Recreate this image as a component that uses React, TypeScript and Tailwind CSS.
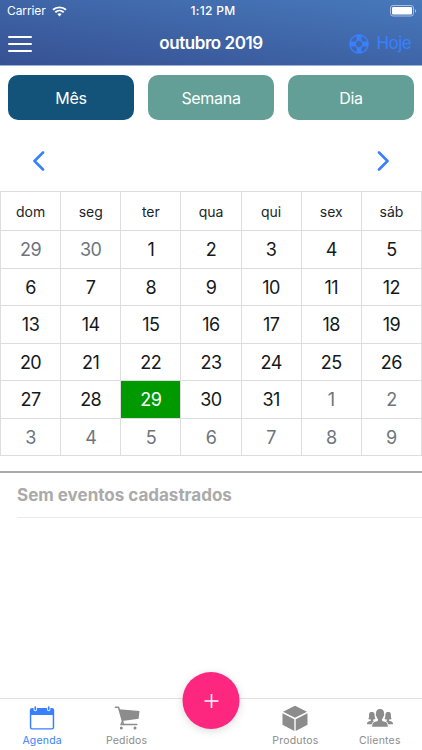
import { IoIosHelpBuoy } from "react-icons/io";

const weekDays = ["dom", "seg", "ter", "qua", "qui", "sex", "sáb"];

const weeks = [
  [29, 30, 1, 2, 3, 4, 5],
  [6, 7, 8, 9, 10, 11, 12],
  [13, 14, 15, 16, 17, 18, 19],
  [20, 21, 22, 23, 24, 25, 26],
  [27, 28, 29, 30, 31, 1, 2],
  [3, 4, 5, 6, 7, 8, 9],
];

function dayClass(day: number, week: number) {
  if (day === 29 && week === 4) return "bg-[#009900] text-white";
  if ((week === 0 && day > 7) || (week > 3 && day < 15)) return "text-[#6c757d]";
  return "text-[#15181b]";
}

function Header() {
  return (
    <header className="h-[66px] border-b border-[#9cb0dc] bg-linear-to-tr from-[#365193] to-[#4779bb] text-white">
      <div className="grid h-[22px] grid-cols-3 items-center pl-[7px] pr-[5px] text-[12px]">
        <div className="flex items-center gap-[6px] tracking-[-0.1px]">
          <span>Carrier</span>
          <svg width="15" height="11" viewBox="0 0 15 11" fill="none" stroke="white" strokeWidth="1.9">
            <path d="M1 3.8C4.6.5 10.4.5 14 3.8" />
            <path d="M3.3 6.3C5.7 4.1 9.3 4.1 11.7 6.3" />
            <path d="M5.3 8.1C6.6 7 8.4 7 9.7 8.1L7.5 10.4Z" fill="white" stroke="none" />
          </svg>
        </div>
        <span className="pl-[2px] text-center font-medium tracking-[0.3px]">1:12 PM</span>
        <svg className="justify-self-end" width="27" height="12" viewBox="0 0 27 12">
          <rect x="0.5" y="0.5" width="23" height="10.5" rx="2.5" fill="none" stroke="#a9bfdf" />
          <rect x="2" y="2" width="20" height="7.5" rx="1.2" fill="white" />
          <path d="M25 4v3.8c1.5-.7 1.5-3.1 0-3.8" fill="#a9bfdf" />
        </svg>
      </div>
      <div className="grid h-[43px] grid-cols-3 items-center pl-2 pr-[11px]">
        <div className="flex w-6 flex-col gap-[5px]">
          <span className="h-[2px] rounded-full bg-white" />
          <span className="h-[2px] rounded-full bg-white" />
          <span className="h-[2px] rounded-full bg-white" />
        </div>
        <h1 className="whitespace-nowrap pl-[3px] text-center text-[17px] font-semibold tracking-[-0.45px]">outubro 2019</h1>
        <div className="flex items-center justify-end gap-[6px] text-[#3880ff]">
          <IoIosHelpBuoy size={24} />
          <span className="text-[17px] tracking-[-0.6px]">Hoje</span>
        </div>
      </div>
    </header>
  );
}

function Calendar() {
  return (
    <div className="grid grid-cols-7 grid-rows-[39px_repeat(6,37.5px)] border-l border-t border-[#dddddd]">
      {weekDays.map((name) => (
        <div key={name} className="flex items-center justify-center border-b border-r border-[#dddddd] pt-[1px] text-[14px] text-[#212529]">
          {name}
        </div>
      ))}
      {weeks.map((days, week) =>
        days.map((day) => (
          <div
            key={`${week}-${day}`}
            className={`flex items-center justify-center border-b border-r border-[#dddddd] pt-[1px] text-[18px] tracking-[-0.5px] ${dayClass(day, week)}`}
          >
            {day}
          </div>
        ))
      )}
    </div>
  );
}

function CalendarIcon() {
  return (
    <svg width="30" height="30" viewBox="0 0 30 30">
      <path
        d="M5 4h20a2.200 2.200 0 0 1 2.200 2.200v17a2.200 2.200 0 0 1-2.200 2.200H5a2.200 2.200 0 0 1-2.200-2.200v-17A2.200 2.200 0 0 1 5 4M4.300 11v12.500a.8.8 0 0 0 .8.8h19.800a.8.8 0 0 0 .8-.8V11z"
        fill="currentColor"
        fillRule="evenodd"
      />
      <path d="M8.300 3v2.500M21.700 3v2.500" stroke="white" strokeWidth="3.400" strokeLinecap="round" />
      <path d="M8.300 3.200v2.300M21.700 3.200v2.300" stroke="currentColor" strokeWidth="1.700" strokeLinecap="round" />
    </svg>
  );
}

function CartIcon() {
  return (
    <svg width="30" height="30" viewBox="0 0 30 30" fill="currentColor">
      <path d="M3.400 3.300h3.100l5 17.200h13.300" fill="none" stroke="currentColor" strokeWidth="1.500" strokeLinecap="round" strokeLinejoin="round" />
      <path d="M7.200 5.300L27.500 7l-.9 7.800L10.400 17z" />
      <path d="M10.300 17.200L9 20.500h3" fill="none" stroke="currentColor" strokeWidth="1.300" />
      <circle cx="9.300" cy="24" r="1.500" />
      <circle cx="23" cy="24" r="1.500" />
    </svg>
  );
}

function CubeIcon() {
  return (
    <svg width="30" height="30" viewBox="0 0 30 30" fill="currentColor">
      <path d="M15 1.800L27 7.700 15 13.800 3 7.700z" />
      <path d="M2.500 9.200L14.300 15.200v11.800L2.500 20.700z" />
      <path d="M27.500 9.200L15.700 15.200v11.800l11.800-6.300z" />
    </svg>
  );
}

function PeopleIcon() {
  return (
    <svg width="30" height="30" viewBox="0 0 30 30" fill="currentColor">
      <path d="M2 20.300c0-2.300.9-2.700 3-3.200 1.200-.3 1.300-.9 1-1.500-1.800-.1-2.600-.5-2.700-.8 1-.8.7-2.600.8-4.600C4.200 8.600 5.200 8 6.700 8s2.700.6 2.900 2.300c.1 1.800 0 3.500.9 4.500-.2.400-1.200.7-2.400.8-.2.900.1 1.300.8 1.600-1.300.8-2 1.700-2.100 3.100z" />
      <path d="M28 20.300c0-2.300-.9-2.700-3-3.200-1.200-.3-1.300-.9-1-1.500 1.800-.1 2.600-.5 2.700-.8-1-.8-.7-2.600-.8-4.600C25.800 8.600 24.800 8 23.300 8s-2.700.6-2.900 2.300c-.1 1.800 0 3.500-.9 4.500.2.400 1.200.7 2.400.8.2.900-.1 1.300-.8 1.600 1.300.8 2 1.700 2.100 3.100z" />
      <path d="M7.200 22.700c0-3.500 1-4.500 3.900-5.200 1.900-.5 2.100-1.200 1.900-2.300-.9-.8-1.300-1.900-1.500-2.900-.7-.2-.9-2-.5-2.400-.3-3.400 1.400-4.900 4-4.900s4.300 1.500 4 4.900c.4.400.2 2.200-.5 2.400-.2 1-.6 2.100-1.500 2.900-.2 1.100 0 1.800 1.900 2.300 2.900.7 3.900 1.700 3.900 5.200z" />
    </svg>
  );
}

function TabBar() {
  return (
    <nav className="relative grid h-[52px] grid-cols-5 border-t border-[#e2e2e2] pt-[5px] text-[10.5px] leading-[14px] tracking-[0.2px] text-[#8c8c8c]">
      <a className="flex flex-col items-center text-[#3880ff]">
        <CalendarIcon />
        <span>Agenda</span>
      </a>
      <a className="flex flex-col items-center">
        <CartIcon />
        <span>Pedidos</span>
      </a>
      <button className="absolute left-1/2 top-[-27px] h-[57px] w-[57px] -translate-x-1/2 rounded-full bg-[#fd2780] shadow-[0_2px_9px_rgba(0,0,0,0.15)]">
        <svg className="mx-auto" width="16" height="16" viewBox="0 0 16 16" stroke="white" strokeWidth="1.6">
          <path d="M8 1v14M1 8h14" />
        </svg>
      </button>
      <a className="col-start-4 flex flex-col items-center">
        <CubeIcon />
        <span>Produtos</span>
      </a>
      <a className="flex flex-col items-center">
        <PeopleIcon />
        <span>Clientes</span>
      </a>
    </nav>
  );
}

export default function App() {
  return (
    <div className="flex h-[750px] w-[422px] flex-col overflow-hidden bg-white font-['Inter',sans-serif]">
      <Header />
      <div className="grid h-[54px] grid-cols-3 gap-[14px] px-2 pt-[9px] text-[16px] tracking-[-0.3px] text-white">
        <button className="rounded-[10px] bg-[#135379]">Mês</button>
        <button className="rounded-[10px] bg-[#639f96]">Semana</button>
        <button className="rounded-[10px] bg-[#639f96]">Dia</button>
      </div>
      <div className="flex h-[71px] items-center justify-between px-8 pt-[10px] text-[#3880ff]">
        <svg width="13" height="20" viewBox="0 0 13 20" fill="none" stroke="currentColor" strokeWidth="2.6" strokeLinecap="round" strokeLinejoin="round">
          <path d="M11 1.5L2.5 10l8.5 8.5" />
        </svg>
        <svg width="13" height="20" viewBox="0 0 13 20" fill="none" stroke="currentColor" strokeWidth="2.6" strokeLinecap="round" strokeLinejoin="round">
          <path d="M2 1.5L10.5 10 2 18.5" />
        </svg>
      </div>
      <Calendar />
      <section className="mt-[15px] flex-1 border-t-2 border-[#aaaaaa]">
        <p className="ml-[17px] flex h-[45px] items-center border-b border-[#ebebeb] pt-[2px] text-[17px] font-bold text-[#aaaaaa]">
          Sem eventos cadastrados
        </p>
      </section>
      <TabBar />
    </div>
  );
}
